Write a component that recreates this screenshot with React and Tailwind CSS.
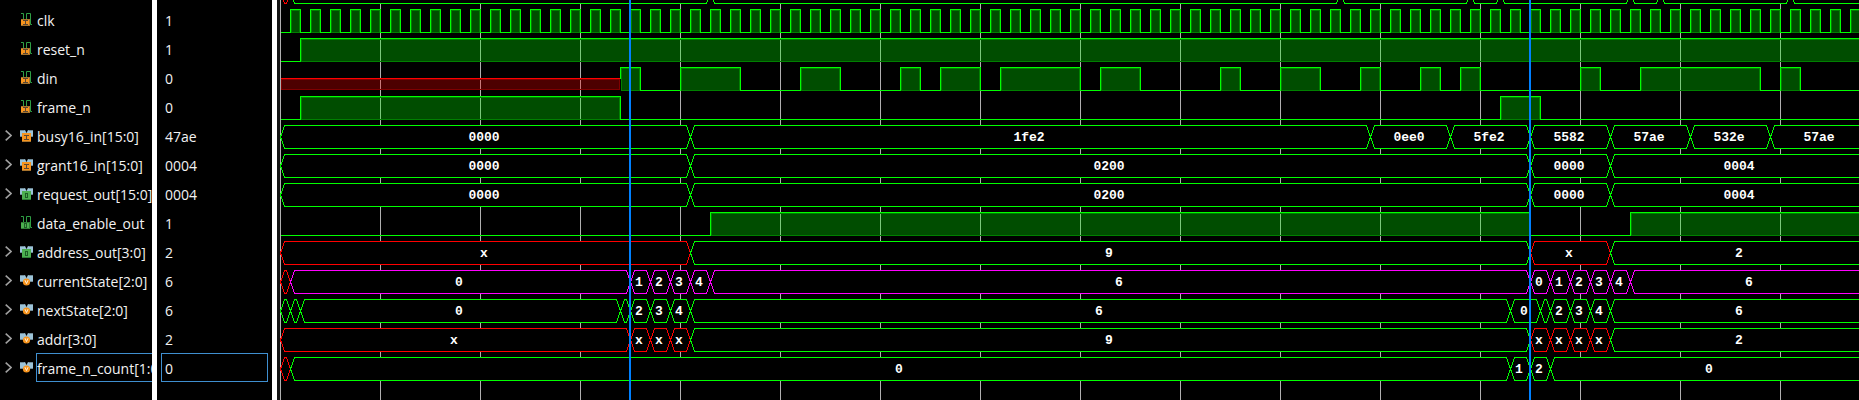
const GREEN = "#00ff00";
const RED = "#ff0000";
const MAGENTA = "#ff00ff";

const ROW = 29;
const FIRST = 5;
const END = 1590; // the last segment runs on past the visible time range

const even = (from, step, values) => values.map((v, i) => [from + i * step, v]);

// Times are in pixels from the start of the trace; one clock period is 20.
// Bits list [rise, fall] pairs, buses list [start, value, colour] segments.
const signals = [
  {
    name: "clk", value: "1", icon: "bit-in",
    high: Array.from({ length: 80 }, (_, i) => [10 + i * 20, 20 + i * 20]),
  },
  { name: "reset_n", value: "1", icon: "bit-in", high: [[20, 3000]] },
  {
    name: "din", value: "0", icon: "bit-in", unknownUntil: 340,
    high: [
      [340, 360], [400, 460], [520, 560], [620, 640], [660, 700], [720, 800],
      [820, 860], [940, 960], [1000, 1040], [1080, 1100], [1140, 1160],
      [1180, 1200], [1300, 1320], [1360, 1480], [1500, 1520],
    ],
  },
  { name: "frame_n", value: "0", icon: "bit-in", high: [[20, 340], [1220, 1260]] },
  {
    name: "busy16_in[15:0]", value: "47ae", icon: "bus-in",
    bus: [
      [0, "0000"], [410, "1fe2"], [1090, "0ee0"], [1170, "5fe2"],
      [1250, "5582"], [1330, "57ae"], [1410, "532e"], [1490, "57ae"],
    ],
  },
  {
    name: "grant16_in[15:0]", value: "0004", icon: "bus-in",
    bus: [[0, "0000"], [410, "0200"], [1250, "0000"], [1330, "0004"]],
  },
  {
    name: "request_out[15:0]", value: "0004", icon: "bus-out",
    bus: [[0, "0000"], [410, "0200"], [1250, "0000"], [1330, "0004"]],
  },
  { name: "data_enable_out", value: "1", icon: "bit-out", high: [[430, 1250], [1350, 3000]] },
  {
    name: "address_out[3:0]", value: "2", icon: "bus-out",
    bus: [[0, "x"], [410, "9"], [1250, "x"], [1330, "2"]],
  },
  {
    name: "currentState[2:0]", value: "6", icon: "bus-var", color: MAGENTA,
    bus: [
      [0, "", RED], [10, "0"], ...even(350, 20, ["1", "2", "3", "4"]), [430, "6"],
      ...even(1250, 20, ["0", "1", "2", "3", "4"]), [1350, "6"],
    ],
  },
  {
    name: "nextState[2:0]", value: "6", icon: "bus-var",
    bus: [
      [0, ""], [10, ""], [20, "0"], [340, ""], ...even(350, 20, ["2", "3", "4"]),
      [410, "6"], [1230, "0"], [1260, ""], ...even(1270, 20, ["2", "3", "4"]), [1330, "6"],
    ],
  },
  {
    name: "addr[3:0]", value: "2", icon: "bus-var",
    bus: [
      [0, "x"], ...even(350, 20, ["x", "x", "x"]), [410, "9"],
      ...even(1250, 20, ["x", "x", "x", "x"]), [1330, "2"],
    ],
  },
  {
    name: "frame_n_count[1:0]", value: "0", icon: "bus-var", selected: true,
    bus: [[0, "", RED], [10, "0"], [1230, "1"], [1250, "2"], [1270, "0"]],
  },
];

const scrolledBus = [
  [0, "", RED], [10, ""], [430, ""], [1060, ""], [1190, ""], [1220, ""],
  [1350, ""], [1380, ""], [1510, ""],
];

function SignalIcon({ kind }) {
  const [shape, role] = kind.split("-");
  const box = role === "out" ? "#4caf50" : "#f7941d";
  const edge = role === "out" ? "#2f7d36" : "#a8732c";
  const ink = role === "out" ? "#1d5c26" : "#5a4632";
  return (
    <svg width="14" height="15" viewBox="0 0 14 15" className="shrink-0" aria-hidden="true">
      {shape === "bit" ? (
        <>
          <path d="M1 1.5H3.5V7M6.5 7V1.5H10.5V12.5H12" fill="none" stroke="#2f9e44" />
          <rect x="1" y="7" width="9" height="7" fill={edge} />
          <rect x="1" y="8" width="8" height="5" fill={box} />
          {role === "out" ? (
            <rect x="4.5" y="8.5" width="2" height="4" fill="none" stroke={ink} />
          ) : (
            <path d="M3 8.5H8M5.5 8.5V12.5M3 12.5H8" fill="none" stroke={ink} />
          )}
        </>
      ) : (
        <>
          <path d="M0 2H5L6.5 5L8 2H13V8H11V9H2V8H0Z" fill="#9cc3d8" />
          <path d="M0 2.5H4.5M8.5 2.5H13M0 8.5H3M10 8.5H13" fill="none" stroke="#6f8a98" />
          {role === "var" ? (
            <>
              <circle cx="6.5" cy="9" r="3.6" fill="#f7941d" />
              <path d="M5 7.2L6.5 10.6L8 7.2" fill="none" stroke="#fff0d8" />
            </>
          ) : (
            <>
              <rect x="2" y="5" width="9" height="9" fill={edge} />
              <rect x="2" y="5" width="9" height="8" fill={box} />
              {role === "out" ? (
                <rect x="5.5" y="7.5" width="2" height="4" fill="none" stroke={ink} />
              ) : (
                <path d="M4 7.5H9M6.5 7.5V11.5M4 11.5H9" fill="none" stroke={ink} />
              )}
            </>
          )}
        </>
      )}
    </svg>
  );
}

function Bit({ top, high, unknownUntil = 0 }) {
  const bottom = top + 23;
  let line = unknownUntil ? `M${unknownUntil} ${top + 11}` : `M0 ${bottom}`;
  high.forEach(([rise, fall], i) => {
    line += i === 0 && unknownUntil ? `V${top}` : `H${rise}V${top}`;
    line += `H${fall}V${bottom}`;
  });
  line += "H3100";
  return (
    <g transform="translate(0.5 0.5)" shapeRendering="crispEdges">
      {high.map(([rise, fall]) => (
        <rect
          key={rise}
          x={rise + 1} y={top + 1} width={fall - rise - 2} height={22}
          fill="#00ff004d" stroke="#008000"
        />
      ))}
      {unknownUntil > 0 && (
        <>
          <rect
            x="1" y={top + 12} width={unknownUntil - 2} height="10"
            fill="#ff00004d" stroke="#800000"
          />
          <path d={`M0 ${top + 11}H${unknownUntil}`} stroke={RED} />
        </>
      )}
      <path d={line} fill="none" stroke={GREEN} />
    </g>
  );
}

function Bus({ top, segments, color = GREEN }) {
  const mid = top + 11.5;
  const bottom = top + 23;
  return (
    <g>
      {segments.map(([start, value, own], i) => {
        const end = i + 1 < segments.length ? segments[i + 1][0] : END;
        return (
          <g key={start}>
            <path
              transform="translate(0.5 0.5)"
              shapeRendering="crispEdges"
              d={`M${start} ${mid}L${start + 4} ${top}H${end - 4}L${end} ${mid}L${end - 4} ${bottom}H${start + 4}Z`}
              fill="#000"
              stroke={own || (value === "x" ? RED : color)}
            />
            {value && (
              <text x={(start + end) / 2 - 1} y={top + 16} fill="#fff" textAnchor="middle">
                {value}
              </text>
            )}
          </g>
        );
      })}
    </g>
  );
}

function Waveforms() {
  return (
    <svg
      className="block min-w-0 flex-1 bg-black font-['Liberation_Mono',monospace] text-[13px] font-bold"
      role="img"
      aria-label="Signal waveforms"
    >
      {Array.from({ length: 30 }, (_, i) => (
        <rect key={i} x={i * 100} y="0" width="1" height="100%" fill="#b0b0b0" />
      ))}
      <Bus top={FIRST + 4 - ROW} segments={scrolledBus} />
      {signals.map((s, i) => {
        const top = FIRST + 4 + i * ROW;
        return s.bus ? (
          <Bus key={s.name} top={top} segments={s.bus} color={s.color} />
        ) : (
          <Bit key={s.name} top={top} high={s.high} unknownUntil={s.unknownUntil} />
        );
      })}
      <rect x="349" y="0" width="2" height="100%" fill="#0080ff" />
      <rect x="1249" y="0" width="2" height="100%" fill="#0080ff" />
    </svg>
  );
}

export default function App() {
  return (
    <main className="flex min-h-screen overflow-hidden bg-black font-['Open_Sans',sans-serif] text-[14px] text-[#f2f2f2]">
      <ul className="w-[152px] shrink-0 overflow-hidden pt-[5px]">
        {signals.map((s) => (
          <li key={s.name} className="flex h-[29px] items-center pl-[5px]">
            <span className="flex w-[15px] shrink-0">
              {s.bus && (
                <button type="button" aria-label={`Expand ${s.name}`}>
                  <svg width="7" height="11" viewBox="0 0 7 11" aria-hidden="true">
                    <path d="M0.7 0.7L6 5.5L0.7 10.3" fill="none" stroke="#a0a0a0" strokeWidth="1.6" />
                  </svg>
                </button>
              )}
            </span>
            <SignalIcon kind={s.icon} />
            <span
              className={`ml-[2px] flex h-full flex-1 items-center border border-r-0 pt-[2px] whitespace-nowrap ${
                s.selected ? "border-[#3f8fd0]" : "border-transparent"
              }`}
            >
              {s.name}
            </span>
          </li>
        ))}
      </ul>
      <div className="w-[5px] shrink-0 bg-white" />
      <ul className="w-[115px] shrink-0 px-1 pt-[5px]">
        {signals.map((s) => (
          <li
            key={s.name}
            className={`flex h-[29px] items-center border pt-[2px] pl-[3px] ${
              s.selected ? "border-[#3f8fd0]" : "border-transparent"
            }`}
          >
            {s.value}
          </li>
        ))}
      </ul>
      <div className="w-[5px] shrink-0 bg-white" />
      <div className="flex min-w-0 flex-1 bg-[#141414] pl-[3px]">
        <Waveforms />
      </div>
    </main>
  );
}
